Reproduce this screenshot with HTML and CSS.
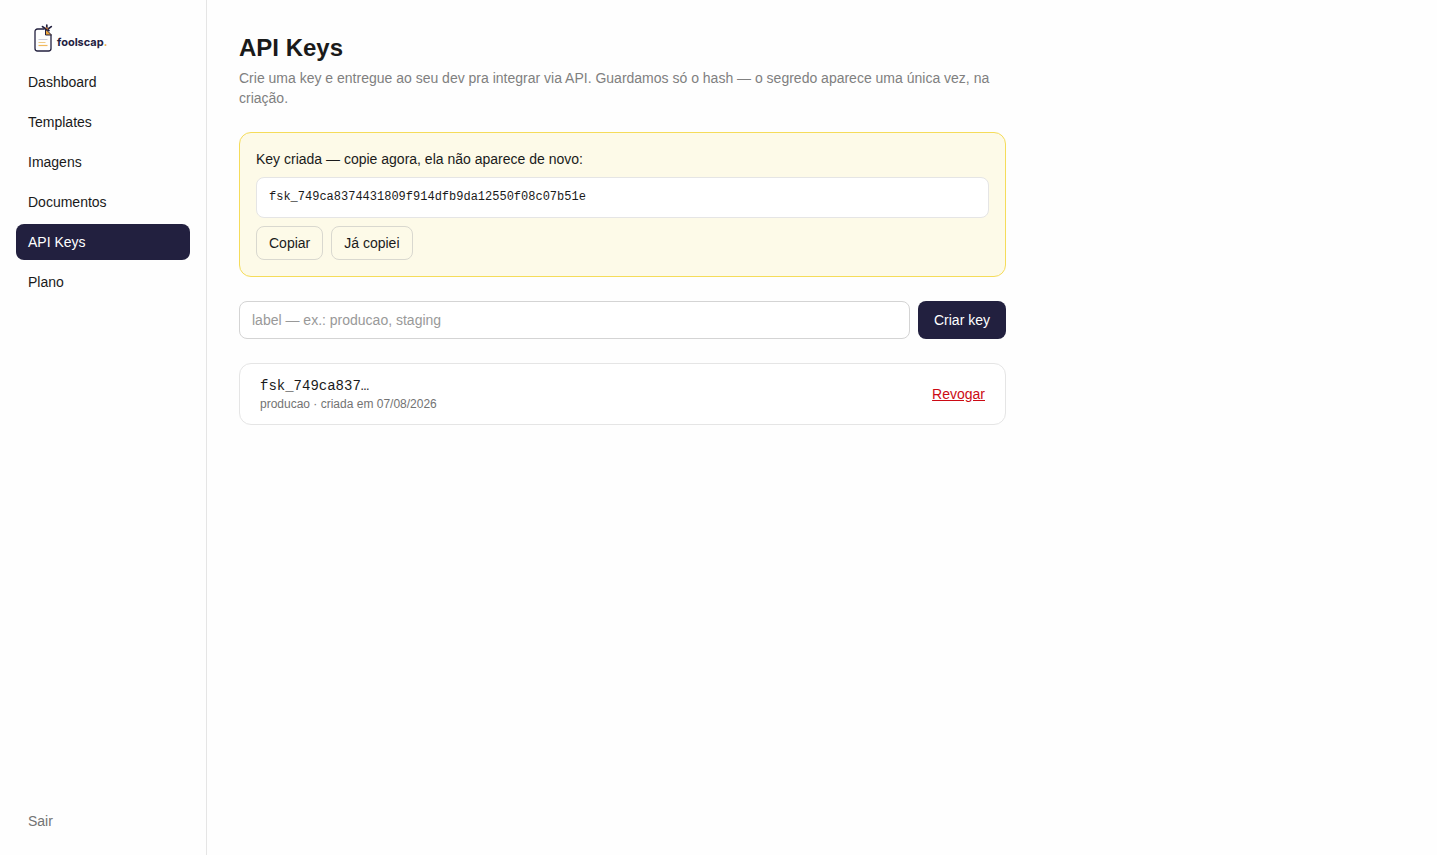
FILE: index.html
```html
<!DOCTYPE html>
<html lang="pt-BR">
<head>
    <meta charset="utf-8" />
    <title>API Keys - foolscap</title>
    <meta name="viewport" content="width=device-width, initial-scale=1">
    <link rel="stylesheet" href="styles.css">
</head>
<body>
    <div class="layout">
        <aside class="sidebar">
            <a href="#" class="logo">
                <svg class="logo-icon" width="22" height="28" viewBox="0 0 22 28" fill="none">
                    <path d="M12.500 5H5.500A2.500 2.500 0 0 0 3 7.500V24.500A2.500 2.500 0 0 0 5.500 27H16.500A2.500 2.500 0 0 0 19 24.500V11" stroke="#23213f" stroke-width="1.300" />
                    <path d="M13.500 5V11H19.500Z" fill="#eda63c" stroke="#23213f" stroke-linejoin="round" />
                    <path d="M10.500 2.600L13.500 4.800M14.800 1V4.500M19.300 2.600L16 5M13.500 5.200L17 6.500" stroke="#23213f" stroke-width="1.700" stroke-linecap="round" />
                    <path d="M13.800 3.400L16 5.200" stroke="#c9742a" stroke-width="1.300" />
                    <path d="M6.500 15.500H15.500" stroke="#c9cbd8" />
                    <path d="M6.500 18.500H13.500" stroke="#f0cb85" />
                    <path d="M6.500 21.500H15.500" stroke="#f0b95c" stroke-width="1.200" />
                </svg>
                <span class="logo-text">foolscap<span class="dot">.</span></span>
            </a>
            <nav class="nav">
                <a href="#">Dashboard</a>
                <a href="#">Templates</a>
                <a href="#">Imagens</a>
                <a href="#">Documentos</a>
                <a href="#" class="active">API Keys</a>
                <a href="#">Plano</a>
            </nav>
            <button type="button" class="logout">Sair</button>
        </aside>

        <main class="content">
            <header>
                <h1>API Keys</h1>
                <p class="intro">Crie uma key e entregue ao seu dev pra integrar via API. Guardamos só o hash — o segredo aparece uma única vez, na criação.</p>
            </header>

            <section class="created">
                <p>Key criada — copie agora, ela não aparece de novo:</p>
                <code class="secret">fsk_749ca8374431809f914dfb9da12550f08c07b51e</code>
                <div class="actions">
                    <button type="button" class="btn">Copiar</button>
                    <button type="button" class="btn">Já copiei</button>
                </div>
            </section>

            <form class="new-key">
                <input type="text" name="label" aria-label="Label da key" placeholder="label — ex.: producao, staging">
                <button type="submit" class="btn-primary">Criar key</button>
            </form>

            <ul class="keys">
                <li>
                    <div>
                        <div class="prefix">fsk_749ca837…</div>
                        <div class="meta">producao · criada em 07/08/2026</div>
                    </div>
                    <button type="button" class="revoke">Revogar</button>
                </li>
            </ul>
        </main>
    </div>
</body>
</html>
```
FILE: styles.css
```css
*{
    box-sizing: border-box;
    margin: 0;
    padding: 0;
}
body{
    background: #fefefe;
    color: #1a1a1a;
    font: 14px/20px "Liberation Sans", Arial, sans-serif;
}
a{
    color: inherit;
    text-decoration: none;
}
button, input{
    font: inherit;
    color: inherit;
}
button{
    background: none;
    border: none;
    cursor: pointer;
}
.layout{
    display: flex;
    min-height: 100vh;
}

/* sidebar */
.sidebar{
    display: flex;
    flex-direction: column;
    flex: none;
    width: 207px;
    padding: 16px;
    border-right: 1px solid #e5e5e5;
}
.logo{
    display: flex;
    align-items: center;
    gap: 3px;
    padding: 8px 16px 12px;
}
.logo-icon{
    display: block;
}
.logo-text{
    color: #23213f;
    font: bold 11px/16px Inter, "Liberation Sans", sans-serif;
    padding-top: 8px;
}
.dot{
    color: #f0a830;
}
.nav{
    display: flex;
    flex-direction: column;
    flex: 1;
    gap: 4px;
}
.nav a, .logout{
    padding: 8px 12px;
    border-radius: 8px;
}
.nav .active{
    background: #22203f;
    color: #fff;
}
.logout{
    color: #737373;
    text-align: left;
}

/* content */
.content{
    display: flex;
    flex-direction: column;
    flex: 1;
    gap: 24px;
    max-width: 831px;
    padding: 32px;
}
h1{
    font-size: 24px;
    line-height: 32px;
}
.intro{
    margin-top: 4px;
    color: #808080;
}
.created{
    display: flex;
    flex-direction: column;
    gap: 8px;
    padding: 16px;
    background: #fdfae8;
    border: 1px solid #f5dc5a;
    border-radius: 12px;
}
.secret{
    padding: 12px;
    background: #fff;
    border: 1px solid #e5e5e5;
    border-radius: 8px;
    font: 12px/15px "Liberation Mono", monospace;
    overflow-wrap: anywhere;
}
.actions{
    display: flex;
    gap: 8px;
}
.btn{
    padding: 6px 12px;
    border: 1px solid #d9d8cf;
    border-radius: 8px;
}
.new-key{
    display: flex;
    gap: 8px;
}
.new-key input{
    flex: 1;
    min-width: 0;
    padding: 8px 12px;
    background: #fff;
    border: 1px solid #d4d4d4;
    border-radius: 8px;
}
.new-key input::placeholder{
    color: #999;
}
.btn-primary{
    padding: 8px 16px;
    background: #22203f;
    color: #fff;
    border-radius: 8px;
}
.keys{
    list-style: none;
    background: #fff;
    border: 1px solid #e5e5e5;
    border-radius: 12px;
}
.keys li{
    display: flex;
    align-items: center;
    justify-content: space-between;
    padding: 12px 20px;
}
.prefix{
    font-family: "Liberation Mono", monospace;
}
.meta{
    color: #737373;
    font-size: 12px;
    line-height: 16px;
}
.revoke{
    color: #cc0a14;
    text-decoration: underline;
}
```
